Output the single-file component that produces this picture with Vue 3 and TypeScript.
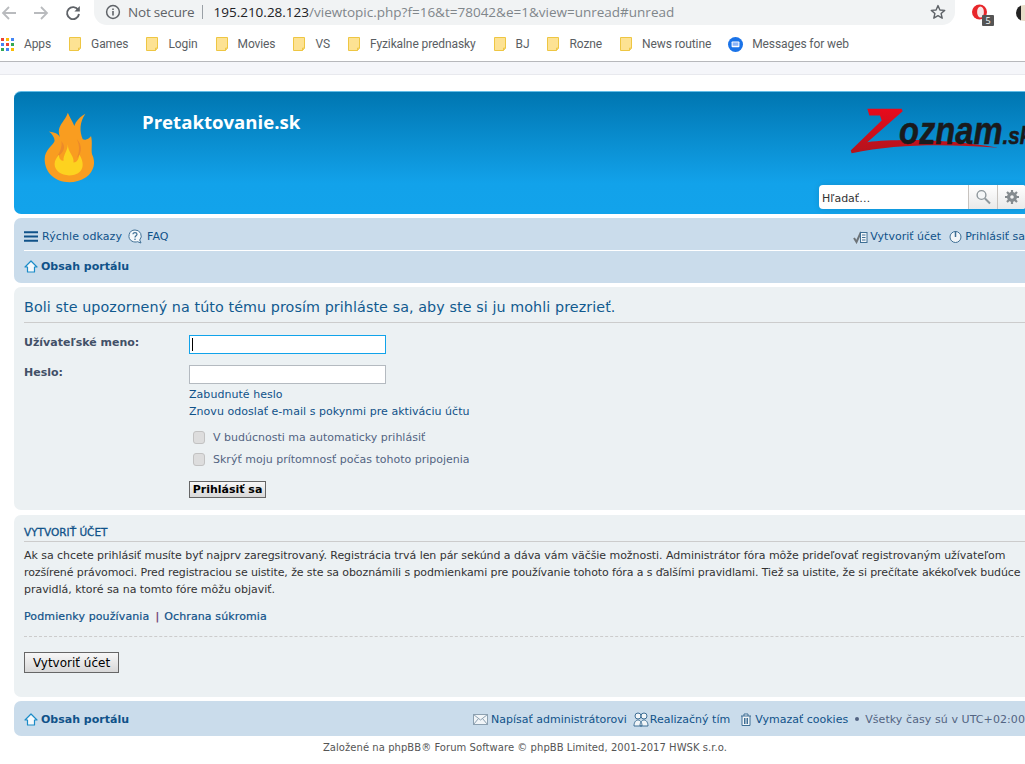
<script setup lang="ts">
const bookmarks = ['Games', 'Login', 'Movies', 'VS', 'Fyzikalne prednasky', 'BJ', 'Rozne', 'News routine']
const appColors = ['#ea4335', '#fbbc05', '#4285f4', '#4285f4', '#ea4335', '#34a853', '#34a853', '#4285f4', '#fbbc05']
</script>

<template>
  <div class="screen">
    <div class="toolbar">
      <svg class="nav-icon" width="16" height="16" viewBox="0 0 16 16"><path d="M15 8H2M8 2 2 8l6 6" fill="none" stroke="#b9bbbe" stroke-width="1.8" /></svg>
      <svg class="nav-icon fwd" width="16" height="16" viewBox="0 0 16 16"><path d="M1 8h13M8 2l6 6-6 6" fill="none" stroke="#b9bbbe" stroke-width="1.8" /></svg>
      <svg class="nav-icon reload" width="16" height="16" viewBox="0 0 16 16"><path d="M13.2 5A6 6 0 1 0 14 9" fill="none" stroke="#5f6368" stroke-width="1.9" /><path d="M14.8 1v5.4H9.4z" fill="#5f6368" /></svg>
      <div class="omnibox">
        <svg width="16" height="16" viewBox="0 0 16 16"><circle cx="8" cy="8" r="6.4" fill="none" stroke="#5f6368" stroke-width="1.5" /><path d="M8 7v4.4M8 4.4v1.5" stroke="#5f6368" stroke-width="1.6" /></svg>
        <span class="secure">Not secure</span>
        <span class="omni-sep"></span>
        <span class="url"><b>195.210.28.123</b>/viewtopic.php?f=16&amp;t=78042&amp;e=1&amp;view=unread#unread</span>
        <svg class="star" width="16" height="16" viewBox="0 0 16 16"><path d="M8 1.6l1.9 4.4 4.8.4-3.6 3.1 1.1 4.7L8 11.7l-4.2 2.5 1.1-4.7-3.6-3.1 4.8-.4z" fill="none" stroke="#5f6368" stroke-width="1.4" stroke-linejoin="round" /></svg>
      </div>
      <div class="ext">
        <svg width="16" height="16" viewBox="0 0 16 16"><circle cx="7.5" cy="8" r="7.500" fill="#e8262a" /><ellipse cx="8.500" cy="8" rx="3.400" ry="5.600" fill="#f6e6e6" /></svg>
        <span class="ext-badge">5</span>
      </div>
      <span class="ext-sep"></span>
      <span class="avatar"></span>
    </div>

    <div class="bookmarks">
      <span class="apps">
        <i v-for="(c, i) in appColors" :key="i" :style="{ background: c }"></i>
      </span>
      <span class="bm-apps">Apps</span>
      <span v-for="b in bookmarks" :key="b" class="bm">
        <svg width="12" height="14" viewBox="0 0 12 14"><path d="M.5.5h11v10.6l-2 2.4H.5z" fill="#fde293" stroke="#eec643" /><path d="M9.5 13.5v-2.4h2" fill="none" stroke="#eec643" /></svg>
        {{ b }}
      </span>
      <span class="bm bm-msg">
        <svg width="15" height="15" viewBox="0 0 15 15"><circle cx="7.5" cy="7.5" r="7.5" fill="#1a73e8" /><rect x="3.6" y="4.4" width="7.8" height="5.8" rx=".8" fill="#fff" /><rect x="4.6" y="5.4" width="5.8" height="3.4" fill="#8ab4f8" /></svg>
        Messages for web
      </span>
    </div>

    <div class="strip"></div>

    <div class="wrap">
      <header class="headerbar">
        <svg class="flame" width="53" height="73" viewBox="130 90 160 220">
          <path d="M210 305C165 305 135 275 135 235 135 205 160 195 165 180 165 170 158 160 148 152 165 155 175 158 182 170 168 135 195 125 205 95 215 120 235 140 225 165 215 135 235 110 258 98 240 125 240 150 250 175 260 180 272 170 275 165 280 185 275 205 278 220 290 245 285 270 260 290 245 300 225 305 210 305z" fill="#f99d20" />
          <path d="M185 180C190 195 180 215 172 228 195 215 200 195 185 180zM232 175C242 195 240 215 232 232 250 215 248 190 232 175z" fill="#ec8a2a" />
          <path d="M205 190C205 215 225 225 222 245 235 245 238 232 240 222 255 245 255 275 225 282 195 290 165 275 165 250 165 238 172 230 178 222 178 235 185 240 192 240 190 222 205 210 205 190z" fill="#fdd21f" />
        </svg>
        <h1 class="site-name">Pretaktovanie.sk</h1>
        <div class="zoznam">
          <svg class="z-mark" width="150" height="47" viewBox="210 50 450 140">
            <defs>
              <linearGradient id="zred" x1="0" y1="0" x2="0" y2="1">
                <stop offset="0" stop-color="#e80a1c" />
                <stop offset="1" stop-color="#b3141d" />
              </linearGradient>
            </defs>
            <path d="M262 55H365L368 62 262 155C350 145 500 145 655 172 500 160 350 160 215 188L212 180 305 90 300 75H268z" fill="url(#zred)" />
          </svg>
          <span class="z-word">oznam<small>.sk</small></span>
        </div>
        <div class="search">
          <span class="search-text">Hľadať…</span>
          <span class="search-btn">
            <svg width="16" height="16" viewBox="0 0 16 16"><circle cx="6.5" cy="6" r="4.4" fill="#f4f6f7" stroke="#8e979c" stroke-width="1.4" /><path d="M10 9.5l5 5" stroke="#8e979c" stroke-width="2" /></svg>
          </span>
          <span class="search-btn">
            <svg width="16" height="16" viewBox="0 0 16 16"><circle cx="8" cy="8" r="3.4" fill="none" stroke="#858b8f" stroke-width="3.200" /><path d="M8 1v3M8 12v3M1 8h3M12 8h3M3 3l2.2 2.2M10.8 10.8 13 13M13 3l-2.2 2.2M5.2 10.8 3 13" stroke="#858b8f" stroke-width="2.2" /></svg>
          </span>
        </div>
      </header>

      <nav class="navbar">
        <div class="nav-row nav-top">
          <span class="nav-link menu">
            <svg width="14" height="11" viewBox="0 0 14 11"><path d="M0 1.2h14M0 5.5h14M0 9.8h14" stroke="#105289" stroke-width="2" /></svg>
            Rýchle odkazy
          </span>
          <span class="nav-link faq">
            <svg width="15" height="15" viewBox="0 0 15 15"><path d="M7 1a6 6 0 0 0-3 11.2c2 1 4 1 5.500.5L13 14l-1.300-3A6 6 0 0 0 7 1z" fill="#f4f8fb" stroke="#3e6f95" /><circle cx="7" cy="10.200" r=".8" fill="#3e6f95" /><path d="M5 5.200C5 3 9 3 9 5.300 9 6.800 7 6.800 7 8.500" fill="none" stroke="#3e6f95" stroke-width="1.200" /></svg>
            FAQ
          </span>
          <span class="spacer"></span>
          <span class="nav-link">
            <svg width="15" height="15" viewBox="0 0 15 15"><path d="M1 9l2.500 4L8 3" fill="none" stroke="#6e7478" stroke-width="2" /><rect x="7.500" y="3.500" width="6.500" height="10" fill="#f1f5f8" stroke="#3e6f95" /><path d="M9 6h3.500M9 8.500h3.500M9 11h3.500" stroke="#3e6f95" /></svg>
            Vytvoriť účet
          </span>
          <span class="nav-link">
            <svg width="13" height="13" viewBox="0 0 13 13"><circle cx="6.500" cy="7" r="5.500" fill="#f1f5f8" stroke="#3e6f95" /><path d="M6.500 1v6" stroke="#3e6f95" stroke-width="1.500" /></svg>
            Prihlásiť sa
          </span>
        </div>
        <div class="nav-row nav-crumbs">
          <span class="crumb">
            <svg width="14" height="13" viewBox="0 0 14 13"><path d="M7 1 1 7h2.500v5h7V7H13z" fill="#f4f8fb" stroke="#1a8bc8" stroke-width="1.200" stroke-linejoin="round" /></svg>
            Obsah portálu
          </span>
        </div>
      </nav>

      <section class="panel login">
        <h2 class="login-title">Boli ste upozornený na túto tému prosím prihláste sa, aby ste si ju mohli prezrieť.</h2>
        <div class="field">
          <label class="field-label">Užívateľské meno:</label>
          <div class="fake-input focused"><i class="caret"></i></div>
        </div>
        <div class="field field-pass">
          <label class="field-label">Heslo:</label>
          <div class="field-body">
            <div class="fake-input"></div>
            <a class="field-link first">Zabudnuté heslo</a>
            <a class="field-link">Znovu odoslať e-mail s pokynmi pre aktiváciu účtu</a>
            <label class="check first-check"><input type="checkbox" />V budúcnosti ma automaticky prihlásiť</label>
            <label class="check"><input type="checkbox" />Skrýť moju prítomnosť počas tohoto pripojenia</label>
            <button class="btn btn-login" type="button">Prihlásiť sa</button>
          </div>
        </div>
      </section>

      <section class="panel register">
        <h3 class="reg-title">VYTVORIŤ ÚČET</h3>
        <p class="reg-text">
          <span class="line line-1">Ak sa chcete prihlásiť musíte byť najprv zaregsitrovaný. Registrácia trvá len pár sekúnd a dáva vám väčšie možnosti. Administrátor fóra môže prideľovať registrovaným užívateľom</span>
          <span class="line line-2">rozšírené právomoci. Pred registraciou se uistite, že ste sa oboznámili s podmienkami pre používanie tohoto fóra a s ďalšími pravidlami. Tiež sa uistite, že si prečítate akékoľvek budúce</span>
          <span class="line line-3">pravidlá, ktoré sa na tomto fóre môžu objaviť.</span>
        </p>
        <p class="reg-links"><a>Podmienky používania</a><span class="pipe">|</span><a>Ochrana súkromia</a></p>
        <hr class="dashed" />
        <button class="btn btn-reg" type="button">Vytvoriť účet</button>
      </section>

      <footer class="navbar foot">
        <div class="nav-row">
          <span class="crumb">
            <svg width="14" height="13" viewBox="0 0 14 13"><path d="M7 1 1 7h2.500v5h7V7H13z" fill="#f4f8fb" stroke="#1a8bc8" stroke-width="1.200" stroke-linejoin="round" /></svg>
            Obsah portálu
          </span>
          <span class="spacer"></span>
          <span class="foot-items">
            <span class="nav-link mail">
              <svg width="15" height="11" viewBox="0 0 15 11"><rect x=".5" y=".5" width="14" height="10" fill="#f1f5f8" stroke="#8ca0b0" /><path d="M.5.5 7.500 6l7-5.500M.5 10.500l5-6M14.500 10.500l-5-6" fill="none" stroke="#8ca0b0" /></svg>
              Napísať administrátorovi
            </span>
            <span class="nav-link team">
              <svg width="16" height="15" viewBox="0 0 16 15"><circle cx="5" cy="4" r="3" fill="#f1f5f8" stroke="#3e6f95" /><circle cx="11" cy="4" r="3" fill="#f1f5f8" stroke="#3e6f95" /><path d="M1 14c0-4 2-6 4-6s4 2 4 6zM7 14c0-4 2-6 4-6s4 2 4 6z" fill="#f1f5f8" stroke="#3e6f95" /></svg>
              Realizačný tím
            </span>
            <span class="nav-link trash">
              <svg width="12" height="13" viewBox="0 0 12 13"><path d="M1 3h10M4 3V1h4v2M2 3v9.500h8V3M4.500 5v6M6 5v6M7.500 5v6" fill="#f1f5f8" stroke="#3e6f95" /></svg>
              Vymazať cookies
            </span>
            <span class="nav-link tz"><i class="dot"></i>Všetky časy sú v UTC+02:00</span>
          </span>
        </div>
      </footer>

      <p class="copyright">Založené na phpBB® Forum Software © phpBB Limited, 2001-2017 HWSK s.r.o.</p>
    </div>
  </div>
</template>

<style scoped>
.screen {
  width: 1025px;
  height: 764px;
  overflow: hidden;
  background: #fff;
  font-family: "DejaVu Sans", Verdana, sans-serif;
  font-size: 11px;
  color: #536482;
}
.toolbar {
  height: 26px;
  display: flex;
  align-items: center;
  padding-left: 1px;
}
.nav-icon { margin-right: 16px; flex: none; }
.nav-icon.reload { margin-right: 13px; }
.omnibox {
  width: 861px;
  height: 26px;
  margin-top: -2px;
  flex: none;
  display: flex;
  align-items: center;
  padding: 0 9px 0 11px;
  box-sizing: border-box;
  background: #f1f3f4;
  border-radius: 0 0 13px 13px;
  font-family: "Open Sans", sans-serif;
  font-size: 13.500px;
  color: #80868b;
}
.secure { margin-left: 7px; color: #5f6368; letter-spacing: -.2px; }
.omni-sep { width: 1px; height: 14px; background: #9aa0a6; margin: 0 10px 0 8px; }
.url b { font-weight: 400; color: #202124; }
.star { margin-left: auto; }
.ext { position: relative; margin: -3px 0 0 17px; width: 16px; height: 16px; }
.ext-badge {
  position: absolute;
  left: 10px;
  top: 11px;
  width: 12px;
  height: 11px;
  border-radius: 1px;
  background: #555;
  color: #fff;
  font: 9px/11px "Open Sans", sans-serif;
  text-align: center;
}
.ext-sep { width: 1px; height: 16px; background: #dadce0; margin-left: 16px; }
.avatar {
  width: 16px;
  height: 16px;
  border-radius: 50%;
  margin-left: 12px;
  flex: none;
  background: linear-gradient(90deg, #222 0 30%, #e7dcc8 30% 60%, #333 60%);
}
.bookmarks {
  height: 36px;
  box-sizing: border-box;
  border-bottom: 1px solid #b7b8bc;
  display: flex;
  align-items: center;
  padding: 1px 0 0 1px;
  font-family: Roboto, sans-serif;
  font-size: 12px;
  letter-spacing: -.1px;
  color: #5a5e63;
}
.apps {
  display: grid;
  grid-template-columns: repeat(3, 3px);
  grid-auto-rows: 3px;
  gap: 2px;
  margin-right: 10px;
}
.apps i { display: block; }
.bm-apps { margin-right: 18px; }
.bm {
  display: flex;
  align-items: center;
  gap: 10px;
  margin-right: 18px;
}
.bm-msg { margin-left: -1px; gap: 9px; }
.strip {
  height: 12px;
  background: #f5f6fa;
  border-bottom: 1px solid #e8e9ee;
}
.wrap {
  width: 1040px;
  margin-left: 14px;
  padding-top: 16px;
}
.headerbar {
  position: relative;
  height: 123px;
  box-sizing: border-box;
  border-radius: 7px;
  border-top: 1px solid #63bde8;
  background: linear-gradient(#0076b1 0, #12a2ea 75%, #12a3eb 100%);
  margin-bottom: 4px;
}
.flame { position: absolute; left: 29px; top: 19px; }
.site-name {
  position: absolute;
  left: 128px;
  top: 18px;
  margin: 0;
  color: #fff;
  font-family: "Open Sans", sans-serif;
  font-size: 18.600px;
  font-weight: 700;
  line-height: 24px;
}
.zoznam { position: absolute; left: 836px; top: 15px; width: 180px; height: 60px; }
.z-mark { position: absolute; left: 0; top: 0; }
.z-word {
  position: absolute;
  left: 49px;
  top: -1px;
  display: inline-block;
  transform: scaleX(.86);
  transform-origin: left top;
  font: italic 700 38px/50px "Liberation Sans", Arial, sans-serif;
  color: #1a1a1c;
  -webkit-text-stroke: .5px #1a1a1c;
  white-space: nowrap;
}
.z-word small { font-size: 24px; }
.search {
  position: absolute;
  left: 805px;
  top: 93px;
  width: 207px;
  height: 24px;
  display: flex;
  align-items: center;
  background: #fff;
  border-radius: 4px;
  overflow: hidden;
  color: #333;
  font-size: 11px;
  box-shadow: 0 0 6px rgba(0, 0, 0, .12);
}
.search-text { flex: 1; padding: 2px 0 0 3px; }
.search-btn {
  width: 29px;
  height: 24px;
  display: flex;
  align-items: center;
  justify-content: center;
  border-left: 1px solid #c7c3bf;
  background: linear-gradient(#fff, #e9e9e9);
  box-sizing: border-box;
}
.navbar {
  background: #cadceb;
  border-radius: 7px;
  padding: 0 10px;
  color: #105289;
  margin-bottom: 4px;
}
.nav-row {
  display: flex;
  align-items: center;
}
.nav-top {
  height: 33px;
  padding: 4px 19px 0 0;
  box-sizing: border-box;
  border-bottom: 1px solid #fff;
  gap: 8px;
}
.nav-crumbs { height: 32px; padding-bottom: 2px; box-sizing: border-box; }
.spacer { flex: 1; }
.nav-link {
  display: inline-flex;
  align-items: center;
  gap: 3px;
  white-space: nowrap;
}
.menu { gap: 4px; letter-spacing: .1px; }
.faq { gap: 4px; margin-left: -2px; }
.nav-top .spacer + .nav-link { gap: 2px; }
.crumb {
  display: inline-flex;
  align-items: center;
  gap: 3px;
  font-weight: 700;
  white-space: nowrap;
}
.panel {
  background: #ecf1f3;
  border-radius: 7px;
  padding: 0 10px;
  margin-bottom: 5px;
}
.login { height: 223px; box-sizing: border-box; padding-top: 11px; }
.login-title {
  margin: 0;
  padding-bottom: 5px;
  border-bottom: 1px solid #ccc;
  color: #115a8f;
  font-size: 14.300px;
  font-weight: 400;
  line-height: 19px;
  letter-spacing: .085px;
}
.field { display: flex; padding-top: 12px; }
.field-pass { padding-top: 11px; }
.field-label {
  width: 165px;
  flex: none;
  padding-top: 1px;
  font-weight: 700;
  color: #425067;
  line-height: 14px;
}
.field-body { display: flex; flex-direction: column; align-items: flex-start; }
.fake-input {
  width: 197px;
  height: 19px;
  box-sizing: border-box;
  background: #fff;
  border: 1px solid #b4bac0;
  position: relative;
}
.fake-input.focused { border-color: #11a3ea; }
.caret {
  position: absolute;
  left: 2px;
  top: 2px;
  width: 1px;
  height: 13px;
  background: #000;
}
.field-link { color: #105289; line-height: 17px; letter-spacing: .04px; }
.field-link.first { margin-top: 2px; }
.check {
  display: flex;
  align-items: center;
  height: 22px;
  padding-left: 4px;
  color: #536482;
}
.first-check { margin-top: 6px; }
.check input {
  appearance: none;
  width: 12px;
  height: 13px;
  margin: 0 8px 0 0;
  background: #dddddd;
  border: 1px solid #c2c2c2;
  border-radius: 3px;
  box-sizing: border-box;
}
.btn {
  padding: 0;
  border: 1px solid #666;
  background: linear-gradient(#f7f7f7, #d8d8d8);
  color: #000;
  font-family: "DejaVu Sans", Verdana, sans-serif;
  font-size: 12px;
  box-sizing: border-box;
}
.btn-login { width: 77px; height: 17px; margin-top: 11px; font-weight: 700; font-size: 11px; line-height: 14px; }
.register { height: 182px; box-sizing: border-box; padding-top: 10px; margin-bottom: 4px; }
.reg-title {
  margin: 0;
  padding-bottom: 2px;
  border-bottom: 1px solid #ccc;
  color: #105289;
  font-size: 10.500px;
  font-weight: 400;
  line-height: 14px;
  -webkit-text-stroke: .3px #105289;
}
.reg-text {
  margin: 5px 0 0;
  color: #333;
  line-height: 17px;
}
.line { display: block; white-space: nowrap; }
.line-1 { letter-spacing: -.05px; }
.line-2 { letter-spacing: -.11px; }
.line-3 { letter-spacing: -.04px; }
.reg-links { margin: 10px 0 0; color: #105289; line-height: 17px; letter-spacing: .12px; -webkit-text-stroke: .2px #105289; }
.pipe { margin: 0 5px 0 6px; color: #8a2b56; }
.dashed { border: 0; border-top: 1px dashed #ccc; margin: 11px 0 0; }
.btn-reg { display: block; width: 95px; height: 21px; margin-top: 15px; font-size: 12px; }
.foot .nav-row { height: 35px; padding-top: 1px; box-sizing: border-box; }
.foot-items { display: inline-flex; align-items: center; gap: 7px; margin-right: 19px; }
.mail { margin-right: -1px; }
.team { gap: 1px; }
.trash { margin-left: 3px; }
.tz { color: #536482; letter-spacing: .08px; }
.dot { width: 4px; height: 4px; border-radius: 50%; background: #536482; margin-right: 3px; }
.copyright {
  width: 1050px;
  margin: 5px 0 0 -14px;
  text-align: center;
  font-size: 10px;
  line-height: 13px;
  letter-spacing: .05px;
  color: #555;
}
</style>

<style>
html, body { margin: 0; background: #fff; overflow: hidden; }
</style>
